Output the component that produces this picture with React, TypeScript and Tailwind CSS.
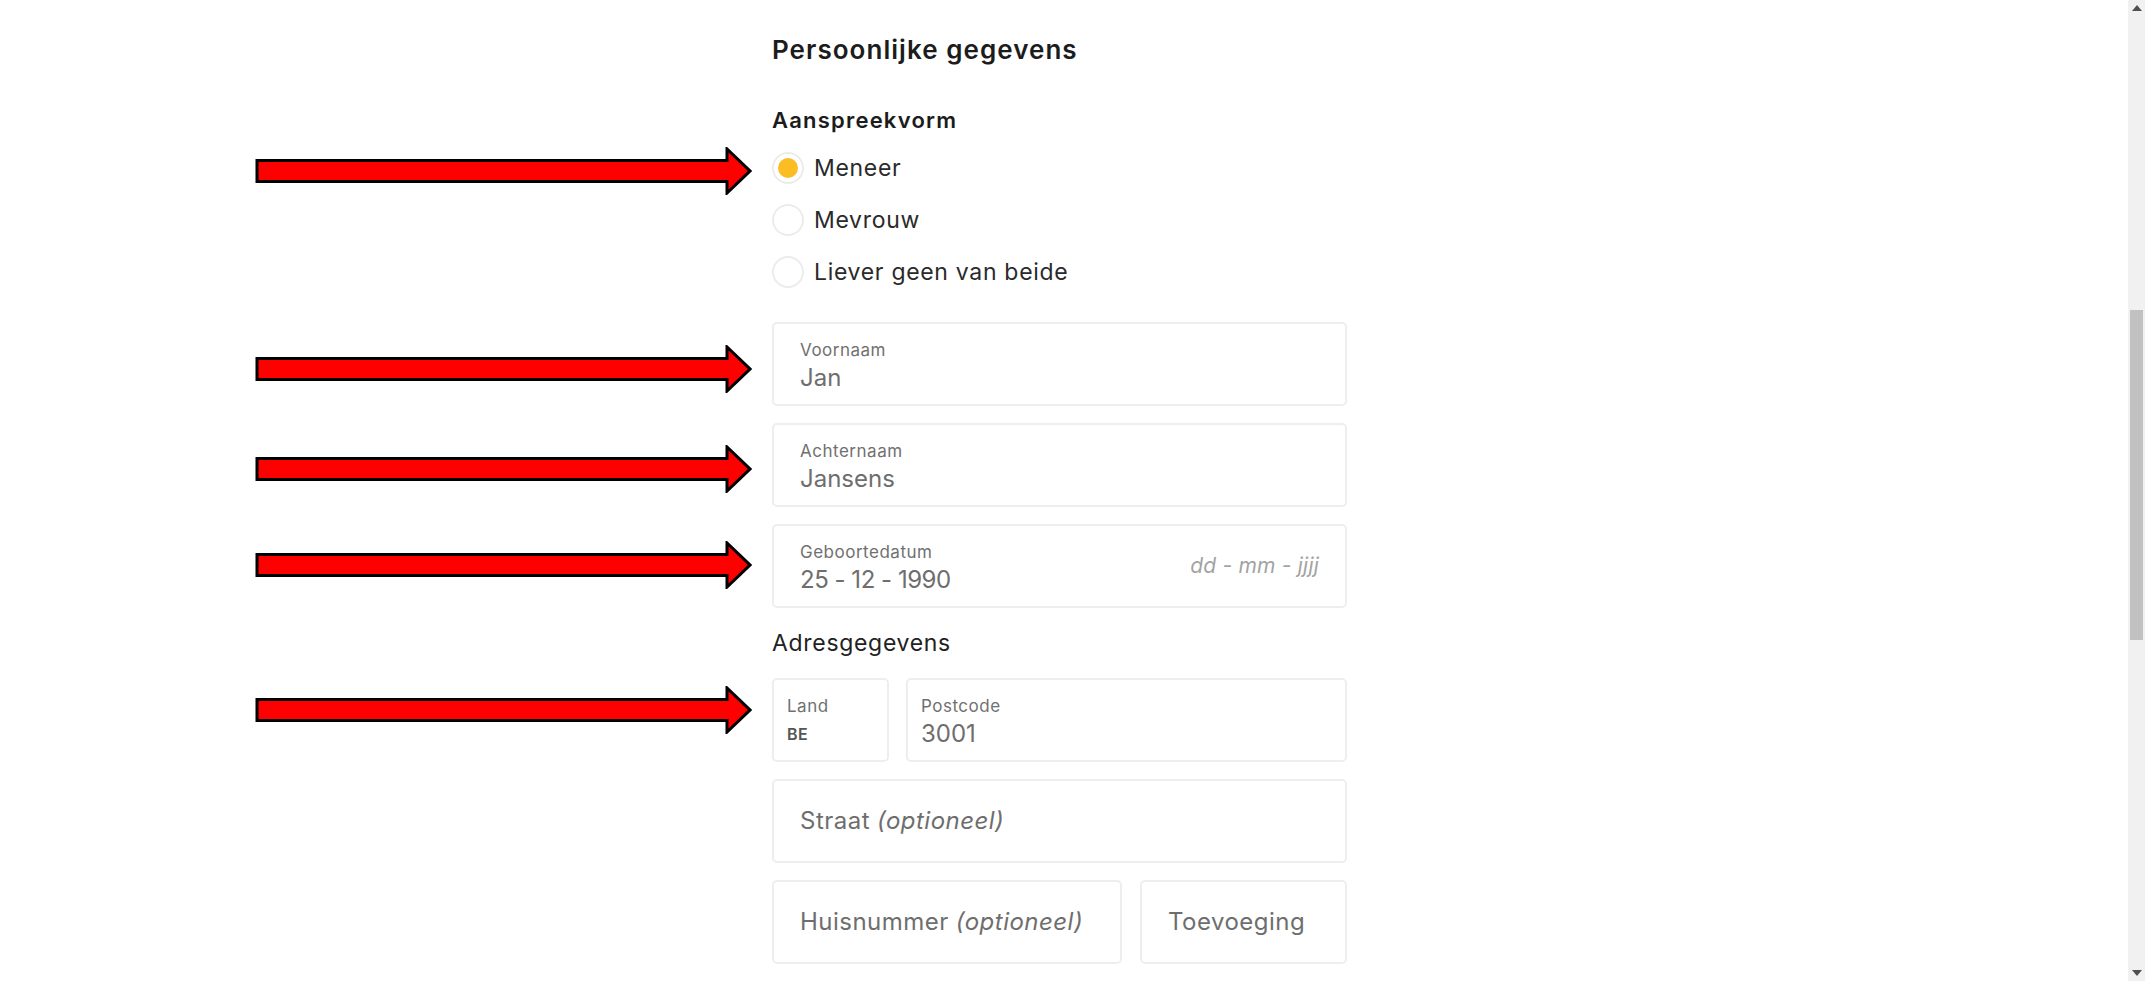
import React from 'react';

const font = { fontFamily: 'Inter, "Open Sans", sans-serif' };

// Red annotation arrow, drawn over the page
const Arrow: React.FC<{ top: number }> = ({ top }) => (
  <svg
    className="absolute left-[255px]"
    style={{ top }}
    width="497"
    height="48"
    viewBox="0 0 497 48"
  >
    <path
      d="M2 13.5 H472 V2 L495 24 L472 46 V34.5 H2 Z"
      fill="#ff0000"
      stroke="#000"
      strokeWidth="3"
      strokeLinejoin="miter"
    />
  </svg>
);

const Radio: React.FC<{ label: string; checked?: boolean }> = ({ label, checked }) => (
  <div className="flex items-center h-[52px] gap-[10px]">
    <span className="flex h-[32px] w-[32px] items-center justify-center rounded-full border-2 border-[#ececec] bg-white">
      {checked && <span className="h-[20px] w-[20px] rounded-full bg-[#fbbc24]" />}
    </span>
    <span className="text-[23px] tracking-[0.03em] text-[#2a2a2a]">{label}</span>
  </div>
);

interface FieldProps {
  label: string;
  value: string;
  hint?: string;
  className?: string;
  valueClass?: string;
  compact?: boolean;
}

const Field: React.FC<FieldProps> = ({ label, value, hint, className, valueClass, compact }) => (
  <div
    className={`relative h-[84px] rounded-[5px] border-2 border-[#eeeeee] bg-white ${
      compact ? 'px-[13px]' : 'px-[26px]'
    } ${className ?? ''}`}
  >
    <div className="pt-[16px] text-[17px] leading-[20px] tracking-[0.03em] text-[#707070]">{label}</div>
    <div className={`mt-[4px] text-[24px] leading-[28px] text-[#6e6e6e] ${valueClass ?? ''}`}>{value}</div>
    {hint && (
      <span className="absolute right-[26px] top-[24px] text-[21px] leading-[32px] italic tracking-[0.01em] text-[#a3a3a3]">
        {hint}
      </span>
    )}
  </div>
);

const Placeholder: React.FC<{ text: string; optional?: boolean; className?: string }> = ({
  text,
  optional,
  className,
}) => (
  <div
    className={`flex h-[84px] items-center rounded-[5px] border-2 border-[#eeeeee] bg-white px-[26px] text-[24px] tracking-[0.02em] text-[#6e6e6e] ${
      className ?? ''
    }`}
  >
    {text}
    {optional && <span className="ml-[7px] italic">(optioneel)</span>}
  </div>
);

export default function App() {
  return (
    <div className="relative flex h-[981px] w-full overflow-hidden bg-white" style={font}>
      {/* Page content */}
      <div className="flex-1">
        <div className="ml-[772px] w-[575px] pt-[33px]">
          <h1 className="text-[26px] font-semibold leading-[34px] tracking-[0.04em] text-[#1c1c1c]">
            Persoonlijke gegevens
          </h1>

          <h2 className="mt-[39px] text-[22px] font-semibold leading-[28px] tracking-[0.055em] text-[#1c1c1c]">
            Aanspreekvorm
          </h2>

          <div className="mt-[8px] flex flex-col">
            <Radio label="Meneer" checked />
            <Radio label="Mevrouw" />
            <Radio label="Liever geen van beide" />
          </div>

          <div className="mt-[24px] flex flex-col gap-[17px]">
            <Field label="Voornaam" value="Jan" />
            <Field label="Achternaam" value="Jansens" />
            <Field
              label="Geboortedatum"
              value="25 - 12 - 1990"
              valueClass="tracking-[-0.02em]"
              hint="dd - mm - jjjj"
            />
          </div>

          <div className="mt-[20px] text-[23px] leading-[30px] tracking-[0.03em] text-[#222]">Adresgegevens</div>

          <div className="mt-[20px] flex flex-col gap-[17px]">
            <div className="flex gap-[17px]">
              <div className="h-[84px] w-[117px] rounded-[5px] border-2 border-[#eeeeee] px-[13px]">
                <div className="pt-[16px] text-[17px] leading-[20px] tracking-[0.03em] text-[#707070]">Land</div>
                <div className="mt-[7px] text-[16px] font-semibold leading-[22px] tracking-[0.03em] text-[#555]">
                  BE
                </div>
              </div>
              <Field label="Postcode" value="3001" compact className="flex-1" />
            </div>
            <Placeholder text="Straat" optional />
            <div className="flex gap-[18px]">
              <Placeholder text="Huisnummer" optional className="w-[350px]" />
              <Placeholder text="Toevoeging" className="flex-1" />
            </div>
          </div>
        </div>
      </div>

      {/* Fake browser scrollbar */}
      <div className="flex w-[17px] flex-col items-center bg-[#f1f1f1]">
        <svg className="mt-[5px]" width="10" height="6" viewBox="0 0 10 6">
          <path d="M5 0 L10 6 H0 Z" fill="#505050" />
        </svg>
        <div className="mt-[299px] h-[330px] w-[13px] bg-[#c1c1c1]" />
        <div className="flex-1" />
        <svg className="mb-[5px]" width="10" height="6" viewBox="0 0 10 6">
          <path d="M0 0 H10 L5 6 Z" fill="#505050" />
        </svg>
      </div>

      {/* Annotation arrows */}
      <Arrow top={147} />
      <Arrow top={345} />
      <Arrow top={445} />
      <Arrow top={541} />
      <Arrow top={686} />
    </div>
  );
}
